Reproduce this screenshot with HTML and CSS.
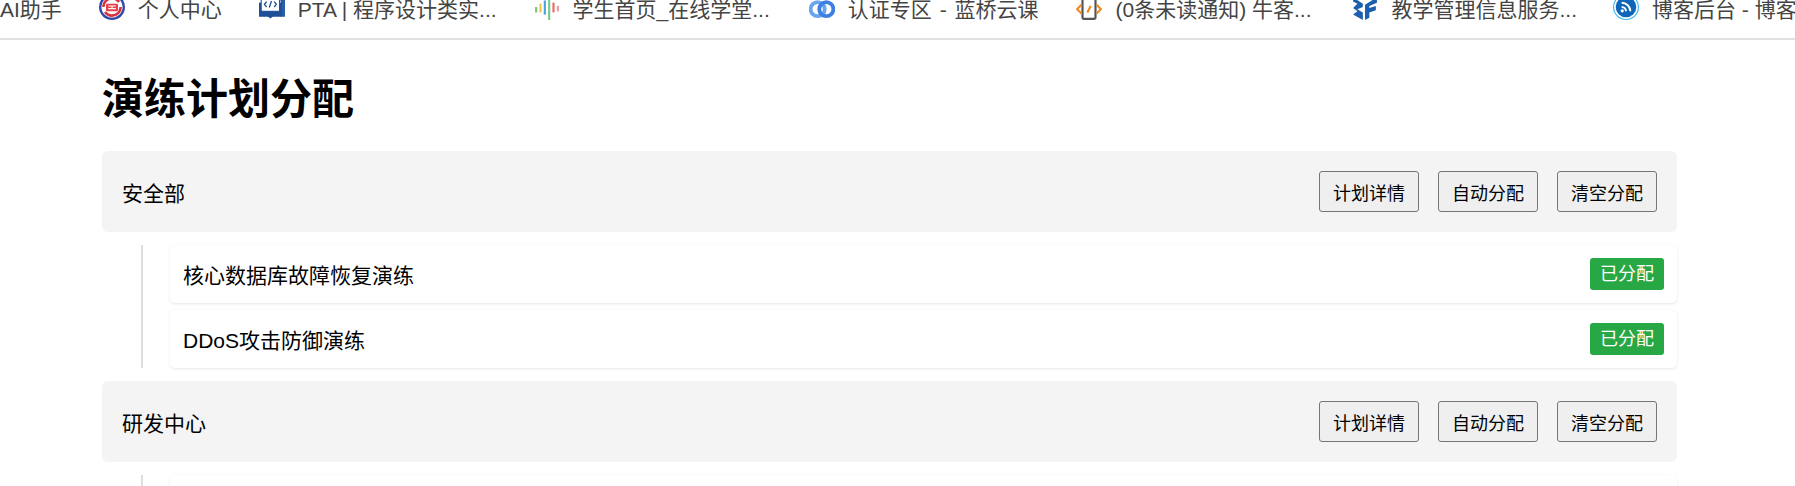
FILE: index.html
```html
<!DOCTYPE html>
<html lang="zh-CN">
<head>
  <meta charset="UTF-8">
  <title>演练计划分配</title>
  <link rel="stylesheet" href="styles.css">
</head>
<body>

  <div class="bookmarks">
    <div class="mark"><span>AI助手</span></div>
    <div class="mark">
      <svg class="icon" viewBox="0 0 24 24"><circle cx="12" cy="12" r="12" fill="#3149a6"/><circle cx="12" cy="12" r="9.800" fill="#fff"/><circle cx="12" cy="12" r="8" fill="none" stroke="#d8323c" stroke-width="2.400" stroke-dasharray="20 5"/><rect x="6.500" y="9" width="11" height="7" rx="1" fill="#e4404a"/><path d="M8.500 11h7M8.500 13.500h7M12 11v3" stroke="#fff" stroke-width="1"/></svg>
      <span>个人中心</span>
    </div>
    <div class="mark">
      <svg class="icon" viewBox="0 0 24 24"><path d="M7 3h17v18h-4v-15h-13z" fill="#2a5da8"/><rect x="0" y="8" width="21" height="13" fill="#1f4f96"/><rect x="2" y="3" width="17" height="13" fill="#fff" stroke="#1f4f96"/><path d="M6 19h9l-4.500 3.500z" fill="#1f4f96"/><path d="M7 7l-2 2.500 2 2.500M14 7l2 2.500-2 2.500M11.500 6.500l-2 6" fill="none" stroke="#1f4f96" stroke-width="1.200"/></svg>
      <span>PTA | 程序设计类实...</span>
    </div>
    <div class="mark">
      <svg class="icon" viewBox="0 0 24 24"><rect x="1" y="12" width="2" height="5" fill="#7fc46a"/><rect x="5" y="9" width="2" height="8" fill="#f2c14e"/><rect x="9" y="6" width="2" height="13" fill="#4aa3df"/><rect x="13" y="5" width="2" height="19" fill="#79c98a"/><rect x="17" y="8" width="2" height="9" fill="#e86a6a"/><rect x="21" y="11" width="2" height="5" fill="#e8a0a0"/></svg>
      <span>学生首页_在线学堂...</span>
    </div>
    <div class="mark mark-lanqiao">
      <svg class="icon" viewBox="0 0 24 24"><circle cx="8" cy="14" r="6.500" fill="none" stroke="#6aa6f0" stroke-width="3.500"/><circle cx="16" cy="14" r="6.500" fill="none" stroke="#3f7fe0" stroke-width="3.500"/></svg>
      <span>认证专区 - 蓝桥云课</span>
    </div>
    <div class="mark mark-nowcoder">
      <svg class="icon" viewBox="0 0 24 24"><rect x="6" y="4" width="12" height="19" rx="1.500" fill="none" stroke="#555" stroke-width="2"/><path d="M5 10l-4 4 4 4M19 10l4 4-4 4M13.500 11l-3 6" fill="none" stroke="#f08a24" stroke-width="2"/></svg>
      <span>(0条未读通知) 牛客...</span>
    </div>
    <div class="mark mark-jw">
      <svg class="icon" viewBox="0 0 24 24"><path d="M4 0h16l-8 6z" fill="#f5a623"/><path d="M1 3l9 6v3l-5 2 5 3v7l-9-5 4-3-4-3 4-4-4-2zM23 3v5l-7 3v2l6-2v4l-6 2v5l-4 2v-14z" fill="#1b5fae"/></svg>
      <span>教学管理信息服务...</span>
    </div>
    <div class="mark mark-blog">
      <svg class="icon" viewBox="0 0 24 24"><circle cx="12" cy="12" r="11.500" fill="none" stroke="#37b6ef" stroke-width="1"/><circle cx="12" cy="12" r="9.500" fill="#0f66b8"/><path d="M8 8a8 8 0 0 1 8 8M8 12a4 4 0 0 1 4 4" fill="none" stroke="#fff" stroke-width="1.800"/><circle cx="8.500" cy="15.500" r="1.500" fill="#fff"/></svg>
      <span>博客后台 - 博客园</span>
    </div>
  </div>

  <div class="page">
    <h1 class="title">演练计划分配</h1>

    <div class="dept">
      <span>安全部</span>
      <div class="actions">
        <button class="btn">计划详情</button>
        <button class="btn">自动分配</button>
        <button class="btn">清空分配</button>
      </div>
    </div>
    <div class="plans">
      <div class="plan">
        <span>核心数据库故障恢复演练</span>
        <span class="badge">已分配</span>
      </div>
      <div class="plan">
        <span>DDoS攻击防御演练</span>
        <span class="badge">已分配</span>
      </div>
    </div>

    <div class="dept">
      <span>研发中心</span>
      <div class="actions">
        <button class="btn">计划详情</button>
        <button class="btn">自动分配</button>
        <button class="btn">清空分配</button>
      </div>
    </div>
    <div class="plans">
      <div class="plan"></div>
    </div>
  </div>

</body>
</html>
```

FILE: styles.css
```css
html, body {
  margin: 0;
  padding: 0;
  height: 486px;
  overflow: hidden;
  background: #fff;
  font-family: "Liberation Sans", "Noto Sans CJK SC", sans-serif;
  color: #000;
}

.bookmarks {
  display: flex;
  gap: 37px;
  height: 38px;
  border-bottom: 2px solid #e0e0e0;
  overflow: hidden;
  white-space: nowrap;
  font-size: 21px;
  line-height: 20px;
  color: #444;
}

.mark {
  display: flex;
  align-items: flex-start;
  gap: 13px;
  flex: none;
}

.mark-lanqiao {
  margin-left: 2px;
  word-spacing: 2px;
}

.mark-nowcoder { margin-left: 1px; }
.mark-jw { margin-left: 4px; }
.mark-blog { margin-left: -1px; }

.icon {
  width: 26px;
  height: 26px;
  margin-top: -6px;
  flex: none;
}

.page {
  padding: 0 118px 0 102px;
}

.title {
  margin: 0;
  height: 111px;
  padding-top: 33px;
  box-sizing: border-box;
  font-size: 42px;
  line-height: 54px;
  font-weight: bold;
}

.dept {
  display: flex;
  justify-content: space-between;
  align-items: center;
  height: 81px;
  padding: 0 20px;
  background: #f4f4f4;
  border-radius: 6px;
  box-sizing: border-box;
  font-size: 21px;
}

.actions {
  display: flex;
  gap: 19px;
}

.btn {
  width: 100px;
  height: 41px;
  padding: 0;
  background: #efefef;
  border: 1px solid #767676;
  border-radius: 3px;
  font-family: inherit;
  font-size: 18px;
  color: #000;
}

.plans {
  display: flex;
  flex-direction: column;
  gap: 7px;
  margin: 13px 0 13px 39px;
  padding-left: 27px;
  border-left: 2px solid #ddd;
}

.plan {
  display: flex;
  justify-content: space-between;
  align-items: center;
  height: 58px;
  padding: 0 13px;
  background: #fff;
  border-radius: 5px;
  box-shadow: 0 1px 3px rgba(0, 0, 0, 0.1);
  box-sizing: border-box;
  font-size: 21px;
}

.badge {
  width: 74px;
  height: 32px;
  line-height: 32px;
  text-align: center;
  background: #28a745;
  border-radius: 3px;
  color: #fff;
  font-size: 18px;
}
```
